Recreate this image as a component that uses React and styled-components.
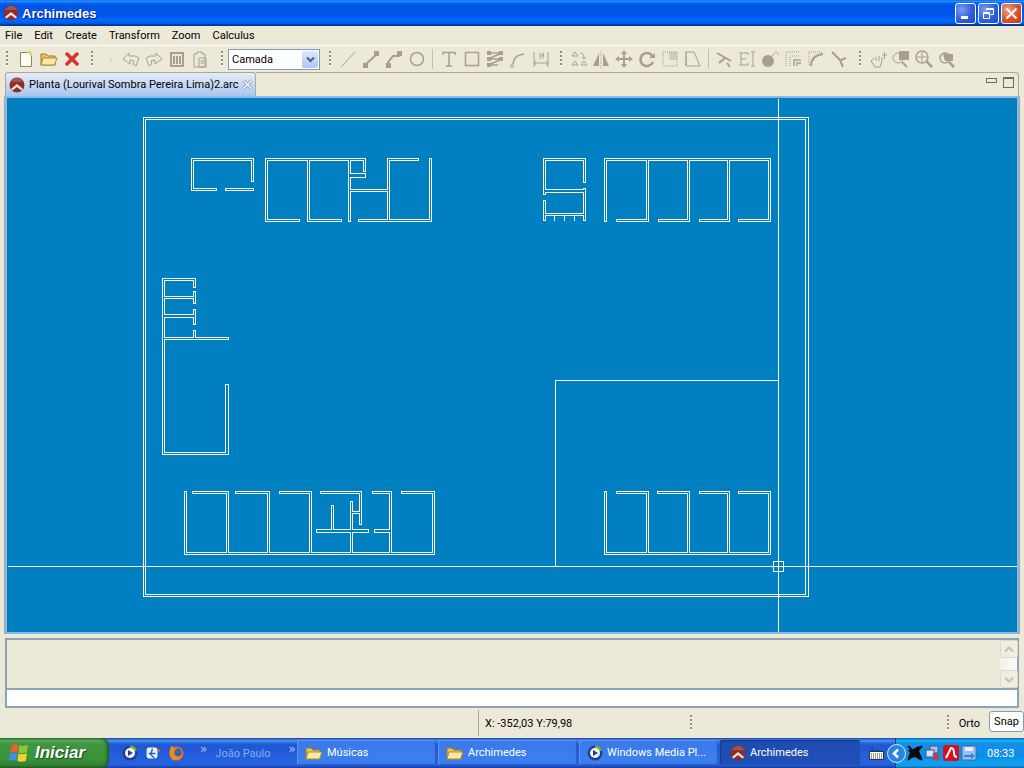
import styled, { createGlobalStyle } from 'styled-components'

const GlobalStyle = createGlobalStyle`
  html, body { margin: 0; padding: 0; background: #ece9d8; }
  body { font-family: Roboto, "Noto Sans", sans-serif; font-size: 11px; color: #000; }
`

const Desktop = styled.div`
  width: 1024px;
  height: 768px;
  overflow: hidden;
  display: flex;
  flex-direction: column;
  background: #ece9d8;
`

/* title bar */
const TitleBar = styled.div`
  height: 26px;
  flex: none;
  display: flex;
  align-items: center;
  padding: 0 2px 0 3px;
  box-sizing: border-box;
  background: linear-gradient(#0058ee 0%, #3593ff 4%, #288eff 6%, #127dff 8%, #036ffc 10%, #0262ee 14%, #0057e5 20%, #0054e3 24%, #0055eb 56%, #005bf5 66%, #026afe 76%, #0062ef 86%, #0052d6 92%, #0040ab 94%, #003092 100%);
`
const TitleText = styled.span`
  margin-left: 3px;
  flex: 1;
  color: #fff;
  font: bold 13px "Liberation Sans", sans-serif;
  text-shadow: 1px 1px 1px #0f1089;
`
const WinButtons = styled.div`
  display: flex;
  gap: 2px;
`
const WinButton = styled.div`
  width: 21px;
  height: 21px;
  box-sizing: border-box;
  border: 1px solid #fff;
  border-radius: 3px;
  display: flex;
  align-items: center;
  justify-content: center;
  background: ${p => p.$close
    ? 'radial-gradient(circle at 30% 30%, #e9a08a, #d8512c 55%, #c23a14)'
    : 'radial-gradient(circle at 30% 30%, #7a9df0, #2f5fe0 55%, #1f48c8)'};
`

/* menu */
const MenuBar = styled.div`
  height: 20px;
  flex: none;
  box-sizing: border-box;
  border-bottom: 1px solid #fff;
  display: flex;
  align-items: center;
  padding-left: 5px;
  gap: 12px;
  font-size: 11px;
  padding-bottom: 1px;
`

/* toolbar */
const ToolBar = styled.div`
  height: 26px;
  flex: none;
  display: flex;
  align-items: center;
  padding-left: 6px;
`
const Grip = styled.div`
  width: 2px;
  height: ${p => p.$h || 16}px;
  margin: 0 ${p => p.$mr ?? 8}px 0 ${p => p.$ml ?? 0}px;
  flex: none;
  background: repeating-linear-gradient(#8f8d80 0 2px, #ffffff 2px 3px, transparent 3px 4px);
`
const Separator = styled.div`
  width: 1px;
  height: 20px;
  background: #c4c1ae;
  margin: 0 ${p => p.$mr ?? 4}px 0 4px;
  flex: none;
`
const ToolSlot = styled.div`
  width: ${p => p.$w || 23}px;
  height: 22px;
  flex: none;
  display: flex;
  align-items: center;
  justify-content: center;
  color: #a5a18e;
`
const Combo = styled.div`
  width: 92px;
  height: 21px;
  flex: none;
  margin: 0 9px 0 -1px;
  box-sizing: border-box;
  border: 1px solid #7f9db9;
  background: #fff;
  display: flex;
  align-items: center;
  justify-content: space-between;
  padding: 0 1px 0 3px;
  font-size: 11px;
`
const ComboArrow = styled.div`
  width: 16px;
  height: 17px;
  border-radius: 2px;
  background: linear-gradient(#dfe8fb, #b2c6f2);
  display: flex;
  align-items: center;
  justify-content: center;
`

/* drawing panel */
const Workspace = styled.div`
  height: 562px;
  flex: none;
  margin: 0 5px;
  display: flex;
  flex-direction: column;
`
const TabStrip = styled.div`
  height: 24px;
  flex: none;
  display: flex;
  align-items: stretch;
`
const Tab = styled.div`
  width: 251px;
  flex: none;
  box-sizing: border-box;
  border: 1px solid #aca899;
  border-bottom: none;
  border-radius: 3px 3px 0 0;
  background: linear-gradient(#e4ecf8, #a9c5ee);
  display: flex;
  align-items: center;
  padding: 0 6px 0 3px;
  gap: 4px;
  svg { flex: none; }
`
const TabTitle = styled.span`
  flex: 1;
  white-space: nowrap;
  font-size: 11px;
`
const TabRest = styled.div`
  flex: 1;
  box-sizing: border-box;
  border-top: 1px solid #aca899;
  border-right: 1px solid #aca899;
  border-top-right-radius: 4px;
  display: flex;
  justify-content: flex-end;
  align-items: flex-start;
  padding: 4px 4px 0 0;
  gap: 6px;
`
const PaneMin = styled.div`
  width: 9px;
  height: 3px;
  margin-top: 1px;
  border: 1px solid #6f6c5f;
`
const PaneMax = styled.div`
  width: 9px;
  height: 8px;
  border: 1px solid #6f6c5f;
  border-top-width: 2px;
`
const CanvasFrame = styled.div`
  flex: 1;
  box-sizing: border-box;
  border: 2px solid #8fb6e8;
  box-shadow: -1px 0 0 #aca899, 1px 0 0 #aca899;
  background: #0080c0;
  display: flex;
`
const Plan = styled.svg`
  display: block;
  width: 1010px;
  height: 534px;
  shape-rendering: crispEdges;
`

/* command area */
const CommandBox = styled.div`
  height: 70px;
  flex: none;
  margin: 4px 5px 0;
  box-sizing: border-box;
  border: 2px solid #8ca3b8;
  display: flex;
  flex-direction: column;
`
const History = styled.div`
  height: 48px;
  flex: none;
  display: flex;
  justify-content: flex-end;
`
const ScrollCol = styled.div`
  width: 17px;
  display: flex;
  flex-direction: column;
  justify-content: space-between;
  background: linear-gradient(90deg, #f3f1e8, #fbfaf6);
`
const ScrollBtn = styled.div`
  width: 16px;
  height: 16px;
  border: 1px solid #dcdac9;
  border-radius: 2px;
  background: #f0eee2;
  display: flex;
  align-items: center;
  justify-content: center;
  color: #c4c2b2;
`
const CommandInput = styled.div`
  flex: 1;
  background: #fff;
  border-top: 2px solid #8ca3b8;
`

/* status bar */
const StatusBar = styled.div`
  height: 30px;
  flex: none;
  display: flex;
  align-items: center;
  font-size: 11px;
`
const StatusCoords = styled.div`
  margin-left: 478px;
  width: 212px;
  height: 26px;
  box-sizing: border-box;
  border-left: 1px solid #aca899;
  padding-left: 6px;
  display: flex;
  align-items: center;
`
const Spring = styled.div`
  flex: 1;
`
const SnapButton = styled.div`
  width: 35px;
  height: 21px;
  box-sizing: border-box;
  border: 1px solid #7f9db9;
  border-radius: 3px;
  background: #fff;
  display: flex;
  align-items: center;
  justify-content: center;
  margin-left: 9px;
  margin-bottom: 4px;
`

/* taskbar */
const TaskBar = styled.div`
  height: 30px;
  flex: none;
  display: flex;
  align-items: stretch;
  color: #fff;
  background: linear-gradient(#1f2f86 0, #3165c4 3%, #3682e5 6%, #4490e6 10%, #3883e5 12%, #2b71e0 15%, #2663da 18%, #235bd6 20%, #2258d5 23%, #2157d6 38%, #245ddb 54%, #2562df 86%, #245fdc 89%, #2158d4 92%, #1d4ec0 95%, #1941a5 98%);
`
const StartButton = styled.div`
  width: 109px;
  flex: none;
  box-sizing: border-box;
  padding-left: 9px;
  display: flex;
  align-items: center;
  gap: 6px;
  border-radius: 0 8px 8px 0;
  background: linear-gradient(#2f7a30 0, #5aa65a 8%, #3f963f 20%, #38933a 70%, #2f7f2f 92%, #245f24 100%);
  box-shadow: inset -2px 0 3px #1d5a1d;
`
const StartLabel = styled.span`
  font: italic bold 17px "Liberation Sans", sans-serif;
  text-shadow: 1px 1px 1px #1a4a1a;
`
const QuickLaunch = styled.div`
  width: 188px;
  flex: none;
  display: flex;
  align-items: center;
  padding-left: 13px;
  box-sizing: border-box;
  gap: 7px;
  svg { flex: none; }
`
const Chevrons = styled.span`
  color: #a9c8f5;
  font: 12px "DejaVu Sans", sans-serif;
  margin-bottom: 8px;
  margin-left: ${p => p.$ml || 0}px;
`
const UserName = styled.span`
  color: #86aef0;
  font-size: 11px;
  margin-left: 1px;
`
const TaskButtons = styled.div`
  display: flex;
  gap: 2px;
  padding: 2px 0 3px;
  box-sizing: border-box;
`
const TaskButton = styled.div`
  width: ${p => p.$w || 139}px;
  box-sizing: border-box;
  border-radius: 2px;
  display: flex;
  align-items: center;
  gap: 4px;
  padding-left: ${p => (p.$active ? 10 : 8)}px;
  font-size: 11px;
  white-space: nowrap;
  background: ${p => (p.$active
    ? 'linear-gradient(#1e4cb0, #2050b8)'
    : 'linear-gradient(#3a78e8, #3c80f0)')};
  box-shadow: ${p => (p.$active
    ? 'inset 1px 1px 1px #163a8c'
    : 'inset 1px 1px 1px #5f97f2, inset -1px -1px 1px #2a5dc8')};
  svg { flex: none; }
`
const KeyboardSlot = styled.div`
  width: 35px;
  flex: none;
  display: flex;
  align-items: center;
  padding-left: 9px;
  box-sizing: border-box;
`
const Tray = styled.div`
  flex: 1;
  display: flex;
  align-items: center;
  gap: 2px;
  border-left: 1px solid #0f3f99;
  background: linear-gradient(#0c59b9 0, #139ee9 6%, #18b5f2 10%, #139beb 14%, #1290e8 19%, #0d8dea 63%, #0d9ff1 81%, #0f9eed 88%, #119be9 91%, #1295d9 94%, #0d5cb5 100%);
  svg { flex: none; }
`
const TrayBackSlot = styled.div`
  display: flex;
  margin: 0 -1px 0 -9px;
`
const Clock = styled.span`
  margin-left: 8px;
  font-size: 11px;
`

/* ---- drawings ---- */
const Archi = ({ size = 16 }) => (
  <svg width={size} height={size} viewBox="0 0 16 16">
    <circle cx="8" cy="8" r="7.5" fill="#8a2f2a" />
    <path d="M8 1a7 7 0 0 1 6 4H2a7 7 0 0 1 6-4z" fill="#a8524a" />
    <path d="M2 12l6-5 6 5-1.5 1.5L8 10l-4.5 3.5z" fill="#f2e6dc" />
  </svg>
)

const Ico = ({ children, w = 20, h = 20 }) => (
  <svg width={w} height={h} viewBox="0 0 20 20" fill="none" stroke="currentColor" strokeWidth="1">{children}</svg>
)

const solid = { fill: 'currentColor', stroke: 'none' }

const toolIcons = {
  undo: <Ico><path d="M2 10l6-6v3h6l4 2-3 8-3-2 1-3-4-1v4z" /></Ico>,
  redo: <Ico><path d="M18 10l-6-6v3H6L2 9l3 8 3-2-1-3 4-1v4z" /></Ico>,
  trash: <Ico><path d="M3 4h14M4 4h12v13H4z" strokeWidth="2" /><path d="M7 7v8M10 7v8M13 7v8" strokeWidth="2" /></Ico>,
  paste: <Ico><path d="M4 5h3V3h5v2h3v13H4z" /><path d="M9 9h7v9H9zM10.500 12h4M10.500 14h4" /></Ico>,
  line: <Ico><path d="M3 18L17 3" /></Ico>,
  thick: <Ico><path d="M4 16L16 5" strokeWidth="2" /><path d="M2 14h5v5H2zM13 2h5v5h-5z" {...solid} /></Ico>,
  poly: <Ico><path d="M4 16v-3l5-6h7" strokeWidth="2" /><path d="M2 14h5v5H2zM13 2h5v5h-5z" {...solid} /></Ico>,
  circle: <Ico><circle cx="10" cy="10" r="6.500" strokeWidth="1.500" /></Ico>,
  text: <Ico><path d="M4 6V3.500h12V6M10 3.500V17M7 17h6" strokeWidth="1.500" /></Ico>,
  rect: <Ico><path d="M3.500 3.500h13v13h-13z" strokeWidth="1.500" /></Ico>,
  multi: <Ico><path d="M3 4h14L3 10h14L3 16h10" strokeWidth="1.500" /><path d="M2 2h4v4H2zM14 2h4v4h-4zM14 8h4v4h-4zM2 8h4v4H2zM2 14h4v4H2z" {...solid} /></Ico>,
  arc: <Ico><path d="M5 15C6 8 9 6 16 5" strokeWidth="1.500" /><circle cx="4" cy="17" r="1.500" /></Ico>,
  dim: <Ico><path d="M3 3v15M17 3v15M3 14h14M3 14l2-2M3 14l2 2M17 14l-2-2M17 14l-2 2M9 4v6M12 4v3h-2M12 4v6" /></Ico>,
  copy: <Ico><path d="M7 3l3 4H4zM4 16l3-4 3 4zM13 16l3-4 3 4zM12 4c3 0 4 2 4 5M14 8l2 2 2-2" /></Ico>,
  mirror: <Ico><path d="M8 4v13H2z" {...solid} /><path d="M12 4v13h6z" {...solid} /><path d="M10 2v17" strokeDasharray="1 1" /></Ico>,
  move: <Ico><path d="M10 3v14M3 10h14" strokeWidth="2" /><path d="M10 1l3 4H7zM10 19l3-4H7zM1 10l4-3v6zM19 10l-4-3v6z" {...solid} /></Ico>,
  rotate: <Ico><path d="M16 8a6.500 6.500 0 1 0 0 5" strokeWidth="2.500" /><path d="M12 9h6v-5z" {...solid} /></Ico>,
  scale: <Ico><path d="M3 3h14v14H3z" strokeDasharray="1 1" /><path d="M9 3h8v8H9z" {...solid} opacity=".4" /></Ico>,
  stretch: <Ico><path d="M3 3h8l6 14H3z" /><path d="M3 3v14" strokeDasharray="1 1" strokeWidth="2" /></Ico>,
  trim: <Ico><path d="M3 4l14 8" strokeWidth="2" /><path d="M5 14l6-5M13 14l3 4" strokeWidth="2" /></Ico>,
  edit: <Ico><path d="M2 4h9M4 4v12M2 16h9M4 10h5M11 4v2M11 16v-2M16 3v14M14 3h4M14 17h4" /></Ico>,
  bomb: <Ico><circle cx="8" cy="12" r="6" {...solid} /><path d="M12 7l3-3M16 2v2M17 5h2" /></Ico>,
  offset: <Ico><path d="M3 17V3h14M7 17V7h10" strokeDasharray="1 1" /><path d="M11 17v-6h7M14 17v-3h4" strokeWidth="1.500" /></Ico>,
  fillet: <Ico><path d="M3 3h14M3 3v14" strokeDasharray="1 1" /><path d="M5 17C5 10 9 6 17 5" strokeWidth="2" /></Ico>,
  extend: <Ico><path d="M3 3l8 8M12 11l5-2M11 11l3 7" strokeWidth="2" /></Ico>,
  hand: <Ico><path d="M6 9l-3 3 4 6h5l2-6V8M8 8v4M11 7v5" /><path d="M14 6h5M16.500 3v7" /></Ico>,
  zoomWin: <Ico><path d="M8 2h10v9H8z" {...solid} /><circle cx="7" cy="9" r="5" /><path d="M11 13l5 5" strokeWidth="2" /></Ico>,
  zoomExt: <Ico><circle cx="8" cy="8" r="6" strokeWidth="1.500" /><path d="M8 3v10M3 8h10" /><path d="M12 12l6 6" strokeWidth="2.500" /></Ico>,
  zoomPrev: <Ico><circle cx="8" cy="9" r="5" strokeWidth="1.500" /><path d="M6 5h10v7H8z" {...solid} /><path d="M12 13l5 5" strokeWidth="2.500" /></Ico>,
  dots: <Ico><path d="M10 6v1M12 9v1M10 12v1M12 11v1" /></Ico>,
}

const Tool = ({ name, w }) => <ToolSlot $w={w}>{toolIcons[name]}</ToolSlot>

const NewDoc = () => (
  <svg width="16" height="18" viewBox="0 0 16 18">
    <path d="M2.500 2.500h8l3 3v11h-11z" fill="#fffef4" stroke="#8f8558" />
    <path d="M12 0l1 2 2 .5-2 1-1 2-1-2-2-1 2-.5z" fill="#f5d33e" />
  </svg>
)
const Folder = ({ w = 18, h = 16 }) => (
  <svg width={w} height={h} viewBox="0 0 18 16">
    <path d="M1 3h5l2 2h7v9H1z" fill="#e8c25a" stroke="#9a7a22" />
    <path d="M3 7h14l-2.500 7H1z" fill="#fde9a4" stroke="#a98a32" />
  </svg>
)
const RedX = () => (
  <svg width="14" height="14" viewBox="0 0 14 14">
    <path d="M2 2l10 10M12 2L2 12" stroke="#d8332c" strokeWidth="3.500" strokeLinecap="round" />
  </svg>
)
const TabClose = () => (
  <svg width="11" height="11" viewBox="0 0 11 11">
    <path d="M1.500 1.500l8 8M9.500 1.500l-8 8" stroke="#7f8a99" strokeWidth="3" />
    <path d="M1.500 1.500l8 8M9.500 1.500l-8 8" stroke="#fff" strokeWidth="1.500" />
  </svg>
)
const ArrowDown = () => (
  <svg width="9" height="7" viewBox="0 0 9 7"><path d="M1 1.500l3.500 3.500L8 1.500" fill="none" stroke="#4d6185" strokeWidth="2" /></svg>
)
const Chevron = ({ up }) => (
  <svg width="10" height="7" viewBox="0 0 10 7">
    <path d={up ? 'M1 5.500l4-4 4 4' : 'M1 1.500l4 4 4-4'} fill="none" stroke="currentColor" strokeWidth="2" />
  </svg>
)
const WinFlag = () => (
  <svg width="20" height="20" viewBox="0 0 19 19">
    <path d="M3 2c2-1 4-1 6 0l-1 7c-2-1-4-1-7 0z" fill="#f0602a" />
    <path d="M10 2c2 1 5 1 8 0l-1 7c-3 1-6 1-8 0z" fill="#8cc63a" />
    <path d="M1 10c3-1 5-1 7 0l-1 7c-2-1-5-1-7 0z" fill="#3a8fe6" />
    <path d="M9 10c2 1 5 1 8 0l-1 7c-3 1-6 1-8 0z" fill="#fbd02c" />
  </svg>
)
const MediaPlayer = () => (
  <svg width="16" height="16" viewBox="0 0 16 16">
    <circle cx="8" cy="8" r="7.500" fill="#1f3f9a" />
    <path d="M8 .5a7.500 7.500 0 0 1 7 5l-3 1A4 4 0 0 0 8 4z" fill="#7ab51d" />
    <circle cx="8" cy="8" r="5" fill="#f4f6fb" />
    <path d="M6 5l5 3-5 3z" fill="#1f3f9a" />
  </svg>
)
const IeIcon = () => (
  <svg width="16" height="16" viewBox="0 0 17 17">
    <rect x="1" y="2" width="13" height="13" rx="3" fill="#eaf4ff" stroke="#1c5fc0" strokeWidth="1.500" />
    <path d="M4 9h7M8 4l-2 6 4 4" fill="none" stroke="#1c5fc0" strokeWidth="1.500" />
    <circle cx="15" cy="6" r="1.500" fill="#e8552a" />
  </svg>
)
const Firefox = () => (
  <svg width="16" height="16" viewBox="0 0 17 17">
    <circle cx="9" cy="9" r="7.500" fill="#e8701c" />
    <circle cx="10" cy="8" r="4.500" fill="#3a62b0" />
    <path d="M2 6c0-3 1-5 3-5 0 2 2 3 5 3-3 1-4 3-3 6 1 2 4 3 8 1-2 4-6 6-9 5-3-1-5-6-4-10z" fill="#f08a1e" />
  </svg>
)
const KeyboardIcon = () => (
  <svg width="15" height="15" viewBox="0 0 15 15">
    <path d="M3 1v4h8" fill="none" stroke="#111" strokeDasharray="1 1" />
    <rect x=".5" y="5.500" width="14" height="8" fill="#f6f6f0" stroke="#333" />
    <path d="M2 8h11M2 10h11M2 12h11" stroke="#444" strokeDasharray="1 1" />
  </svg>
)
const TrayBack = () => (
  <svg width="19" height="19" viewBox="0 0 19 19">
    <circle cx="9.500" cy="9.500" r="9" fill="#2a83df" stroke="#d6ecff" />
    <path d="M11 5.500l-4 4 4 4" fill="none" stroke="#fff" strokeWidth="2.500" />
  </svg>
)
const TrayMuted = () => (
  <svg width="16" height="16" viewBox="0 0 16 16">
    <path d="M1 5l5-1 6-3 2 2-2 3 3 7-2 2-5-3-6 2-1-2 2-4z" fill="#0a0a0a" />
    <path d="M1 1l14 14M15 1L1 15" stroke="#0a0a0a" strokeWidth="2" />
  </svg>
)
const TrayNet = () => (
  <svg width="16" height="16" viewBox="0 0 16 16">
    <rect x="5" y="1" width="8" height="7" fill="#a9c3ec" stroke="#44557a" />
    <rect x="1" y="5" width="8" height="7" fill="#d8e4f6" stroke="#44557a" />
    <path d="M8 9l6 6M14 9l-6 6" stroke="#d8332c" strokeWidth="2" />
  </svg>
)
const TrayAvira = () => (
  <svg width="16" height="16" viewBox="0 0 16 16">
    <rect width="16" height="16" rx="2" fill="#d8101c" />
    <path d="M3 13L8 3c2 0 3 2 3 5s1 4 3 4" fill="none" stroke="#fff" strokeWidth="2" />
  </svg>
)
const TraySave = () => (
  <svg width="16" height="16" viewBox="0 0 16 16">
    <rect x="1" y="1" width="14" height="14" rx="1" fill="#9fbde6" stroke="#47699c" />
    <rect x="4" y="2" width="8" height="4" fill="#e8eef8" />
    <path d="M3 10h7V8l4 3-4 3v-2H3z" fill="#1e88e8" />
  </svg>
)

/* ---- planta ---- */
const walls = [
  [253,158, 191,158, 191,190, 216,190, 216,188, 193,188, 193,160, 251,160, 251,181, 253,181],
  [225,188, 253,188, 253,190, 225,190],
  [265,158, 365,158, 365,171, 363,171, 363,160, 350,160, 350,173, 365,173, 365,177, 350,177, 350,189, 387,189, 387,158, 418,158, 418,160, 389,160, 389,219, 429,219, 429,158, 431,158, 431,221, 358,221, 358,219, 387,219, 387,191, 350,191, 350,221, 348,221, 348,160, 309,160, 309,219, 341,219, 341,221, 307,221, 307,160, 267,160, 267,219, 299,219, 299,221, 265,221],
  [543,158, 585,158, 585,182, 583,182, 583,160, 545,160, 545,189, 583,189, 583,188, 585,188, 585,220, 583,220, 583,215, 545,215, 545,220, 543,220, 543,200, 545,200, 545,213, 583,213, 583,192, 545,192, 545,194, 543,194],
  [604,158, 770,158, 770,221, 738,221, 738,219, 768,219, 768,160, 729,160, 729,221, 699,221, 699,219, 727,219, 727,160, 689,160, 689,221, 658,221, 658,219, 687,219, 687,160, 648,160, 648,221, 616,221, 616,219, 646,219, 646,160, 606,160, 606,221, 604,221],
  [162,278, 195,278, 195,287, 193,287, 193,280, 164,280, 164,296, 193,296, 193,291, 195,291, 195,303, 193,303, 193,298, 164,298, 164,314, 193,314, 193,309, 195,309, 195,324, 193,324, 193,317, 164,317, 164,337, 193,337, 193,330, 195,330, 195,337, 228,337, 228,339, 164,339, 164,452, 225,452, 225,384, 228,384, 228,454, 162,454],
  [184,491, 186,491, 186,552, 226,552, 226,493, 192,493, 192,491, 228,491, 228,552, 267,552, 267,493, 235,493, 235,491, 269,491, 269,552, 309,552, 309,493, 279,493, 279,491, 311,491, 311,552, 350,552, 350,532, 316,532, 316,529, 331,529, 331,505, 333,505, 333,529, 350,529, 350,501, 352,501, 352,511, 359,511, 359,493, 320,493, 320,491, 361,491, 361,524, 359,524, 359,513, 352,513, 352,529, 368,529, 368,532, 352,532, 352,552, 389,552, 389,532, 374,532, 374,529, 389,529, 389,493, 372,493, 372,491, 391,491, 391,552, 432,552, 432,493, 401,493, 401,491, 434,491, 434,554, 184,554],
  [604,491, 606,491, 606,552, 646,552, 646,493, 616,493, 616,491, 648,491, 648,552, 687,552, 687,493, 657,493, 657,491, 689,491, 689,552, 727,552, 727,493, 699,493, 699,491, 729,491, 729,552, 768,552, 768,493, 738,493, 738,491, 770,491, 770,554, 604,554],
]

const FloorPlan = () => (
  <Plan viewBox="7 98 1010 534">
    <g transform="translate(.5 .5)" fill="none" stroke="#fff" strokeWidth="1">
      <rect x="143" y="117" width="665" height="479" />
      <rect x="145" y="119" width="660" height="475" />
      {walls.map((w, i) => <polygon key={i} points={w.join(' ')} />)}
      <path d="M554 215v5M564 215v5M574 215v5" />
      <path d="M555 566V380H778" />
      <path d="M7 566H1017M778 98V632" />
      <rect x="773" y="561" width="10" height="10" />
    </g>
  </Plan>
)

const App = () => (
  <>
    <GlobalStyle />
    <Desktop>
      <TitleBar>
        <Archi />
        <TitleText>Archimedes</TitleText>
        <WinButtons>
          <WinButton>
            <svg width="13" height="13" viewBox="0 0 13 13"><path d="M2 9h7v3H2z" fill="#fff" /></svg>
          </WinButton>
          <WinButton>
            <svg width="13" height="13" viewBox="0 0 13 13" fill="none" stroke="#fff"><path d="M1.500 5.500h6v6h-6zM1.500 6.500h6" /><path d="M4.500 3.500v-2h7v6h-3M4.500 2.500h7" /></svg>
          </WinButton>
          <WinButton $close>
            <svg width="13" height="13" viewBox="0 0 13 13"><path d="M1.500 1.500l10 10M11.500 1.500l-10 10" stroke="#fff" strokeWidth="2" /></svg>
          </WinButton>
        </WinButtons>
      </TitleBar>

      <MenuBar>
        <span>File</span><span>Edit</span><span>Create</span><span>Transform</span><span>Zoom</span><span>Calculus</span>
      </MenuBar>

      <ToolBar>
        <Grip $mr={6} />
        <ToolSlot><NewDoc /></ToolSlot>
        <ToolSlot><Folder /></ToolSlot>
        <ToolSlot><RedX /></ToolSlot>
        <Grip $ml={8} $mr={8} />
        <Tool name="dots" w={18} />
        <Tool name="undo" />
        <Tool name="redo" />
        <Tool name="trash" />
        <Tool name="paste" />
        <Grip $ml={10} $mr={6} />
        <Combo>Camada<ComboArrow><ArrowDown /></ComboArrow></Combo>
        <Grip $mr={5} />
        <Tool name="line" />
        <Tool name="thick" />
        <Tool name="poly" />
        <Tool name="circle" />
        <Separator />
        <Tool name="text" />
        <Tool name="rect" />
        <Tool name="multi" />
        <Tool name="arc" />
        <Tool name="dim" />
        <Grip $ml={8} $mr={4} />
        <Tool name="copy" />
        <Tool name="mirror" />
        <Tool name="move" />
        <Tool name="rotate" />
        <Tool name="scale" />
        <Tool name="stretch" />
        <Separator $mr={3} />
        <Tool name="trim" />
        <Tool name="edit" />
        <Tool name="bomb" />
        <Tool name="offset" />
        <Tool name="fillet" />
        <Tool name="extend" />
        <Grip $ml={9} $mr={5} />
        <Tool name="hand" />
        <Tool name="zoomWin" />
        <Tool name="zoomExt" />
        <Tool name="zoomPrev" />
      </ToolBar>

      <Workspace>
        <TabStrip>
          <Tab>
            <Archi size={16} />
            <TabTitle>Planta (Lourival Sombra Pereira Lima)2.arc</TabTitle>
            <TabClose />
          </Tab>
          <TabRest>
            <PaneMin />
            <PaneMax />
          </TabRest>
        </TabStrip>
        <CanvasFrame>
          <FloorPlan />
        </CanvasFrame>
      </Workspace>

      <CommandBox>
        <History>
          <ScrollCol>
            <ScrollBtn><Chevron up /></ScrollBtn>
            <ScrollBtn><Chevron /></ScrollBtn>
          </ScrollCol>
        </History>
        <CommandInput />
      </CommandBox>

      <StatusBar>
        <StatusCoords>X: -352,03 Y:79,98</StatusCoords>
        <Grip $mr={0} />
        <Spring />
        <Grip $mr={10} />
        <span>Orto</span>
        <SnapButton>Snap</SnapButton>
      </StatusBar>

      <TaskBar>
        <StartButton>
          <WinFlag />
          <StartLabel>Iniciar</StartLabel>
        </StartButton>
        <QuickLaunch>
          <MediaPlayer />
          <IeIcon />
          <Firefox />
          <Chevrons $ml={9}>»</Chevrons>
          <UserName>João Paulo</UserName>
          <Chevrons $ml={11}>»</Chevrons>
        </QuickLaunch>
        <TaskButtons>
          <TaskButton><Folder />Músicas</TaskButton>
          <TaskButton><Folder />Archimedes</TaskButton>
          <TaskButton><MediaPlayer />Windows Media Pl...</TaskButton>
          <TaskButton $active $w={140}><Archi />Archimedes</TaskButton>
        </TaskButtons>
        <KeyboardSlot><KeyboardIcon /></KeyboardSlot>
        <Tray>
          <TrayBackSlot><TrayBack /></TrayBackSlot>
          <TrayMuted />
          <TrayNet />
          <TrayAvira />
          <TraySave />
          <Clock>08:33</Clock>
        </Tray>
      </TaskBar>
    </Desktop>
  </>
)

export default App
